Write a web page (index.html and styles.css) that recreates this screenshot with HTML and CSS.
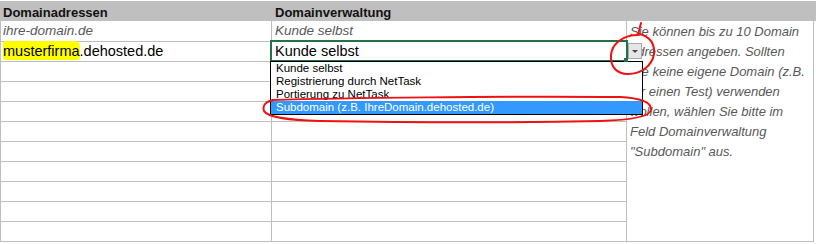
FILE: index.html
```html
<!DOCTYPE html>
<html lang="de">
<head>
    <meta charset="UTF-8">
    <title>Domainadressen</title>
    <link rel="stylesheet" href="styles.css">
</head>
<body>
<div class="sheet">
    <div class="head">
        <div class="hcell c1">Domainadressen</div>
        <div class="hcell c2">Domainverwaltung</div>
    </div>
    <div class="grid">
        <div class="col col-a">
            <div class="cell first hint">ihre-domain.de</div>
            <div class="cell"><span class="marker">musterfirma</span>.dehosted.de</div>
            <div class="cell"></div>
            <div class="cell"></div>
            <div class="cell"></div>
            <div class="cell"></div>
            <div class="cell"></div>
            <div class="cell"></div>
            <div class="cell"></div>
            <div class="cell"></div>
            <div class="cell"></div>
        </div>
        <div class="col col-b">
            <div class="cell first hint">Kunde selbst</div>
            <div class="cell active">Kunde selbst
                <div class="drop-btn"><span class="tri"></span></div>
                <div class="menu">
                    <div class="item">Kunde selbst</div>
                    <div class="item">Registrierung durch NetTask</div>
                    <div class="item">Portierung zu NetTask</div>
                    <div class="item on">Subdomain (z.B. IhreDomain.dehosted.de)</div>
                </div>
            </div>
            <div class="cell"></div>
            <div class="cell"></div>
            <div class="cell"></div>
            <div class="cell"></div>
            <div class="cell"></div>
            <div class="cell"></div>
            <div class="cell"></div>
            <div class="cell"></div>
            <div class="cell"></div>
        </div>
        <div class="note">
            Sie können bis zu 10 Domain<br>
            adressen angeben. Sollten<br>
            Sie keine eigene Domain (z.B.<br>
            für einen Test) verwenden<br>
            wollen, wählen Sie bitte im<br>
            Feld Domainverwaltung<br>
            "Subdomain" aus.
        </div>
    </div>

    <!-- red pen marks drawn over the screenshot -->
    <svg class="marks" width="816" height="244" viewBox="0 0 816 244">
        <path d="M641 22 L638 34 C624 34 612 42 611 54 C610 66 617 73 628 73 C641 73 652 65 654 53 C655 42 650 36 640 33"/>
        <path d="M272 99 C340 97 500 95 620 96 C640 97 652 101 651 109 C650 116 630 119 600 120 C500 122 380 121 320 120 C290 119 268 117 264 110 C262 104 266 100 275 99"/>
    </svg>
</div>
</body>
</html>
```

FILE: styles.css
```css
body {
    margin: 0;
    padding-top: 1px;
    background: #fff;
    font-family: "Liberation Sans", Arial, sans-serif;
    color: #000;
}

.sheet {
    position: relative;
    width: 816px;
}

.head {
    display: flex;
    height: 20px;
    background: #bfbfbf;
}

.hcell {
    box-sizing: border-box;
    padding: 3px 0 0 3px;
    font-size: 13px;
    font-weight: bold;
    line-height: 17px;
    color: #111;
}

.hcell.c1 {
    width: 272px;
}

.hcell.c2 {
    width: 355px;
}

.grid {
    display: flex;
    align-items: flex-start;
}

.col {
    display: flex;
    flex-direction: column;
    box-sizing: border-box;
    border-right: 1px solid #bfbfbf;
}

.col-a {
    width: 272px;
    border-left: 1px solid #bfbfbf;
}

.col-b {
    width: 355px;
}

.cell {
    box-sizing: border-box;
    height: 20px;
    padding-left: 2px;
    border-bottom: 1px solid #bfbfbf;
    font-size: 14.5px;
    line-height: 19px;
    white-space: nowrap;
}

.col-b .cell {
    padding-left: 3px;
}

.cell.first {
    height: 21px;
    line-height: 20px;
}

.hint {
    font-style: italic;
    font-size: 13.5px;
    color: #595959;
}

.marker {
    background: #ffff00;
    padding: 2px 0 1px;
    border-radius: 2px 5px 3px 2px;
}

/* selected cell with its dropdown */
.cell.active {
    position: relative;
}

.cell.active::before {
    content: "";
    position: absolute;
    left: -2px;
    top: -2px;
    width: 358px;
    height: 22px;
    box-sizing: border-box;
    border: 2px solid #217346;
    z-index: 1;
}

.cell.active::after {
    content: "";
    position: absolute;
    left: 352px;
    top: 16px;
    width: 4px;
    height: 4px;
    background: #217346;
    z-index: 3;
}

.drop-btn {
    position: absolute;
    left: 356px;
    top: 1px;
    width: 14px;
    height: 16px;
    box-sizing: border-box;
    border: 1px solid #a9a9a9;
    background: #e6e6e6;
    display: flex;
    align-items: center;
    justify-content: center;
}

.tri {
    width: 0;
    height: 0;
    border-left: 3px solid transparent;
    border-right: 3px solid transparent;
    border-top: 3px solid #4a4a4a;
}

.menu {
    position: absolute;
    left: -2px;
    top: 19px;
    width: 373px;
    box-sizing: border-box;
    border: 1px solid #000;
    background: #fff;
    z-index: 2;
}

.item {
    height: 13px;
    padding-left: 5px;
    font-size: 11.5px;
    line-height: 13px;
    color: #000;
}

.item.on {
    background: #3399ff;
    color: #fff;
}

.note {
    box-sizing: border-box;
    width: 187px;
    height: 221px;
    padding: 1px 0 0 3px;
    border-right: 1px solid #bfbfbf;
    border-bottom: 1px solid #bfbfbf;
    font-size: 13px;
    font-style: italic;
    line-height: 20px;
    color: #595959;
    white-space: nowrap;
}

.marks {
    position: absolute;
    left: 0;
    top: 0;
    pointer-events: none;
    z-index: 5;
}

.marks path {
    fill: none;
    stroke: #f01010;
    stroke-width: 2;
    stroke-linecap: round;
    stroke-linejoin: round;
}
```
